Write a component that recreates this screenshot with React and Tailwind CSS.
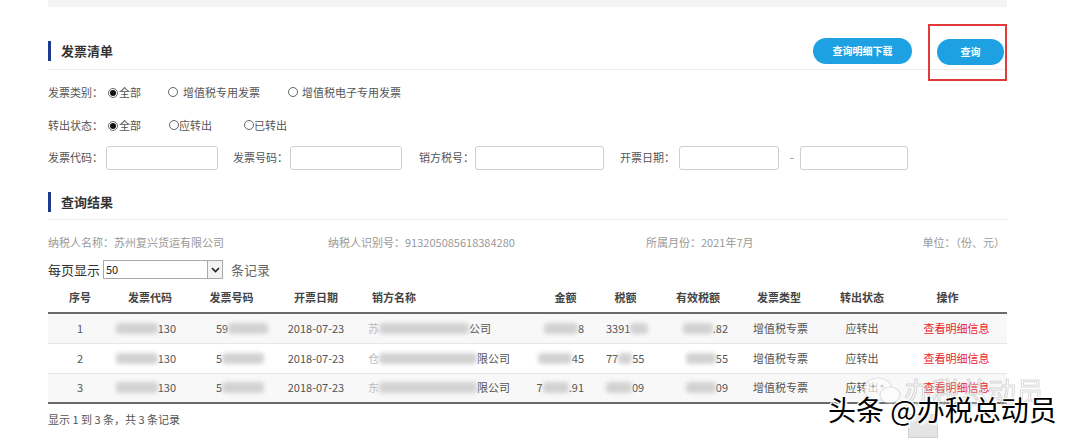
import React from "react";

const COLS = "grid grid-cols-[64px_76px_87px_82px_171px_67px_61px_84px_78px_88px_101px]";

const Blur = ({ w }) => (
    <span className={`inline-block ${w} h-[11px] bg-[#d2d2d2] blur-[2px] align-middle rounded-sm`} />
);

const Radio = ({ checked }) => (
    <span className="inline-flex w-[10px] h-[10px] rounded-full border border-[#666] items-center justify-center bg-white">
        {checked && <span className="w-[6px] h-[6px] rounded-full bg-[#111]" />}
    </span>
);

const SectionTitle = ({ title, children, className = "" }) => (
    <div className={`flex items-center justify-between border-b border-[#ececec] pb-[4px] ${className}`}>
        <div className="flex items-center h-[26px]">
            <span className="w-[3px] h-[20px] bg-[#1d3b8c]" />
            <span className="ml-[10px] text-[13px] font-bold text-[#333]">{title}</span>
        </div>
        {children}
    </div>
);

const Field = ({ label, lw, w, ml }) => (
    <div className={`flex items-center ${ml}`}>
        <span className={`${lw} text-[11px] text-[#555]`}>{label}</span>
        <div className={`${w} h-[24px] border border-[#cfcfcf] rounded-[3px] bg-white`} />
    </div>
);

const rows = [
    {
        n: "1",
        code: <><Blur w="w-[42px]" /><span>130</span></>,
        no: <><span>59</span><Blur w="w-[40px]" /></>,
        name: <><span className="text-[#bbb]">苏</span><Blur w="w-[90px]" /><span>公司</span></>,
        amt: <><Blur w="w-[34px]" /><span>8</span></>,
        tax: <><span>3391</span><Blur w="w-[18px]" /></>,
        eff: <><Blur w="w-[30px]" /><span>.82</span></>,
        st: "应转出",
    },
    {
        n: "2",
        code: <><Blur w="w-[42px]" /><span>130</span></>,
        no: <><span>5</span><Blur w="w-[42px]" /></>,
        name: <><span className="text-[#bbb]">仓</span><Blur w="w-[98px]" /><span>限公司</span></>,
        amt: <><Blur w="w-[34px]" /><span>45</span></>,
        tax: <><span>77</span><Blur w="w-[14px]" /><span>55</span></>,
        eff: <><Blur w="w-[30px]" /><span>55</span></>,
        st: "应转出",
    },
    {
        n: "3",
        code: <><Blur w="w-[42px]" /><span>130</span></>,
        no: <><span>5</span><Blur w="w-[42px]" /></>,
        name: <><span className="text-[#bbb]">东</span><Blur w="w-[98px]" /><span>限公司</span></>,
        amt: <><span>7</span><Blur w="w-[26px]" /><span>.91</span></>,
        tax: <><Blur w="w-[26px]" /><span>09</span></>,
        eff: <><Blur w="w-[30px]" /><span>09</span></>,
        st: "应转出",
    },
];

export default function App() {
    return (
        <div
            className="relative w-[1080px] h-[445px] overflow-hidden bg-white"
            style={{ fontFamily: '"Noto Sans CJK SC", "Noto Sans", sans-serif' }}
        >
            <div className="ml-[48px] w-[959px]">
                <div className="h-[7px] bg-[#f4f4f4]" />

                <SectionTitle title="发票清单" className="mt-[23px] pt-[7px]">
                    <div className="flex items-center pr-[3px]">
                        <button className="w-[99px] h-[26px] rounded-full bg-[#1ea1e3] text-white text-[10px] font-bold">
                            查询明细下载
                        </button>
                        <div className="relative ml-[25px]">
                            <button className="w-[67px] h-[26px] rounded-full bg-[#1ea1e3] text-white text-[10px] font-bold">
                                查询
                            </button>
                            <div className="absolute left-[-9px] top-[-13px] right-[-3px] bottom-[-16px] border-2 border-[#e23a3a]" />
                        </div>
                    </div>
                </SectionTitle>

                <div className="mt-[11px] h-[24px] flex items-center text-[11px] text-[#555]">
                    <span className="w-[60px]">发票类别：</span>
                    <Radio checked />
                    <span className="ml-[1px]">全部</span>
                    <span className="ml-[27px]"><Radio /></span>
                    <span className="ml-[5px]">增值税专用发票</span>
                    <span className="ml-[28px]"><Radio /></span>
                    <span className="ml-[4px]">增值税电子专用发票</span>
                </div>

                <div className="mt-[9px] h-[24px] flex items-center text-[11px] text-[#555]">
                    <span className="w-[60px]">转出状态：</span>
                    <Radio checked />
                    <span className="ml-[1px]">全部</span>
                    <span className="ml-[28px]"><Radio /></span>
                    <span>应转出</span>
                    <span className="ml-[32px]"><Radio /></span>
                    <span>已转出</span>
                </div>

                <div className="mt-[8px] h-[24px] flex items-center">
                    <Field label="发票代码：" lw="w-[58px]" w="w-[112px]" ml="" />
                    <Field label="发票号码：" lw="w-[57px]" w="w-[112px]" ml="ml-[15px]" />
                    <Field label="销方税号：" lw="w-[56px]" w="w-[129px]" ml="ml-[17px]" />
                    <Field label="开票日期：" lw="w-[59px]" w="w-[100px]" ml="ml-[16px]" />
                    <span className="w-[21px] pl-[11px] text-[11px] text-[#777]">-</span>
                    <div className="w-[108px] h-[24px] border border-[#cfcfcf] rounded-[3px]" />
                </div>

                <SectionTitle title="查询结果" className="mt-[19px]" />

                <div className="mt-[13px] h-[20px] flex items-center text-[11px] text-[#999]">
                    <span className="w-[280px]">纳税人名称：苏州复兴货运有限公司</span>
                    <span className="w-[318px]">纳税人识别号：913205085618384280</span>
                    <span>所属月份：2021年7月</span>
                    <span className="ml-auto pr-[2px]">单位：（份、元）</span>
                </div>

                <div className="mt-[7px] h-[20px] flex items-center text-[13px] text-[#333]">
                    <span>每页显示</span>
                    <div className="ml-[3px] w-[120px] h-[19px] border border-[#a9a9a9] flex items-center justify-between">
                        <span className="pl-[2px] text-[11px] text-[#222]">50</span>
                        <span className="w-[15px] h-[17px] border-l border-[#a9a9a9] flex items-center justify-center bg-[#f3f3f3]">
                            <svg width="9" height="6" viewBox="0 0 9 6">
                                <path d="M1 1 L4.5 4.5 L8 1" fill="none" stroke="#222" strokeWidth="1.6" />
                            </svg>
                        </span>
                    </div>
                    <span className="ml-[8px] text-[#666]">条记录</span>
                </div>

                <div className="mt-[4px]">
                    <div className={`${COLS} h-[30px] items-center border-b-2 border-[#6a6a6a] text-[11px] font-bold text-[#444]`}>
                        <span className="text-center">序号</span>
                        <span className="text-center">发票代码</span>
                        <span className="text-center">发票号码</span>
                        <span className="text-center">开票日期</span>
                        <span className="pl-[15px]">销方名称</span>
                        <span className="text-center pl-[8px]">金额</span>
                        <span className="text-center">税额</span>
                        <span className="text-center">有效税额</span>
                        <span className="text-center">发票类型</span>
                        <span className="text-center">转出状态</span>
                        <span className="text-center pr-[18px]">操作</span>
                    </div>
                    {rows.map((r, i) => (
                        <div
                            key={r.n}
                            className={`${COLS} h-[30px] items-center text-[11px] text-[#555] ${i % 2 === 0 ? "bg-[#f8f8f8]" : "bg-white"} ${i < 2 ? "border-b border-[#e6e6e6]" : "border-b-2 border-[#6a6a6a]"}`}
                        >
                            <span className="text-center">{r.n}</span>
                            <span className="flex items-center justify-end pr-[12px]">{r.code}</span>
                            <span className="flex items-center pl-[28px]">{r.no}</span>
                            <span className="text-center">2018-07-23</span>
                            <span className="flex items-center pl-[11px]">{r.name}</span>
                            <span className="flex items-center justify-end pr-[11px]">{r.amt}</span>
                            <span className="flex items-center pl-[11px]">{r.tax}</span>
                            <span className="flex items-center justify-end pr-[12px]">{r.eff}</span>
                            <span className="pl-[13px]">增值税专票</span>
                            <span className="text-center">{r.st}</span>
                            <span className="text-center text-[#e8232b]">查看明细信息</span>
                        </div>
                    ))}
                </div>

                <div className="mt-[6px] h-[20px] flex items-center text-[11px] text-[#555]">
                    <span>显示 1 到 3 条，共 3 条记录</span>
                    <div className="ml-[728px] mt-[12px] w-[30px] h-[24px] bg-[#e4e4e4] border border-[#d0d0d0]" />
                </div>
            </div>

            <div className="absolute left-[862px] top-[376px] flex items-center opacity-70">
                <svg width="40" height="30" viewBox="0 0 40 30">
                    <ellipse cx="16" cy="13" rx="14" ry="11" fill="#ffffff" stroke="#d8d8d8" strokeWidth="1.2" />
                    <circle cx="11" cy="10" r="1.6" fill="#bbb" />
                    <circle cx="20" cy="10" r="1.6" fill="#bbb" />
                    <ellipse cx="28" cy="19" rx="10" ry="8" fill="#ffffff" stroke="#d8d8d8" strokeWidth="1.2" />
                </svg>
                <span className="ml-[2px] text-[28px] leading-none text-transparent [-webkit-text-stroke:1px_#c9c9c9]">办税总动员</span>
            </div>
            <div className="absolute left-[828px] top-[395px] text-[28px] leading-none text-black [text-shadow:1px_1px_0_#fff,-1px_-1px_0_#fff,1px_-1px_0_#fff,-1px_1px_0_#fff,2px_2px_2px_#fff]">
                头条 @办税总动员
            </div>
        </div>
    );
}
